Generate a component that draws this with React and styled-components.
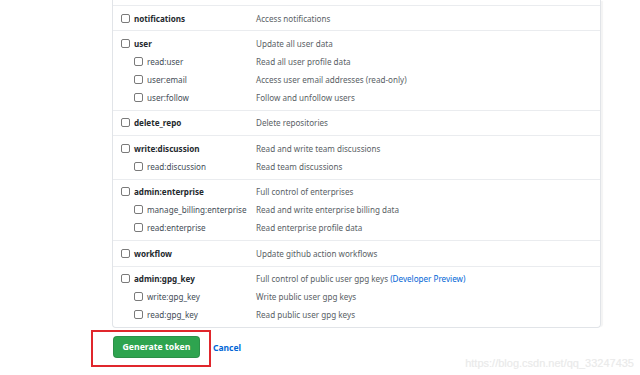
import React from 'react'
import styled, { createGlobalStyle } from 'styled-components'

const scopes = [
    { name: 'notifications', desc: 'Access notifications' },
    {
        name: 'user', desc: 'Update all user data', children: [
            { name: 'read:user', desc: 'Read all user profile data' },
            { name: 'user:email', desc: 'Access user email addresses (read-only)' },
            { name: 'user:follow', desc: 'Follow and unfollow users' },
        ]
    },
    { name: 'delete_repo', desc: 'Delete repositories' },
    {
        name: 'write:discussion', desc: 'Read and write team discussions', children: [
            { name: 'read:discussion', desc: 'Read team discussions' },
        ]
    },
    {
        name: 'admin:enterprise', desc: 'Full control of enterprises', children: [
            { name: 'manage_billing:enterprise', desc: 'Read and write enterprise billing data' },
            { name: 'read:enterprise', desc: 'Read enterprise profile data' },
        ]
    },
    { name: 'workflow', desc: 'Update github action workflows' },
    {
        name: 'admin:gpg_key', desc: 'Full control of public user gpg keys', preview: true, children: [
            { name: 'write:gpg_key', desc: 'Write public user gpg keys' },
            { name: 'read:gpg_key', desc: 'Read public user gpg keys' },
        ]
    },
]

const App = () => {
    return (
        <Page>
            <GlobalStyle />
            {/* Scope list (scrolled, top is cut off) */}
            <ScopeBox>
                {scopes.map((scope) => (
                    <ScopeGroup key={scope.name}>
                        <Row>
                            <Name>
                                <Check />
                                <Label $strong>{scope.name}</Label>
                            </Name>
                            <Desc>
                                {scope.desc}
                                {scope.preview && <Preview> (Developer Preview)</Preview>}
                            </Desc>
                        </Row>
                        {scope.children && scope.children.map((child) => (
                            <Row key={child.name}>
                                <Name $sub>
                                    <Check />
                                    <Label>{child.name}</Label>
                                </Name>
                                <Desc>{child.desc}</Desc>
                            </Row>
                        ))}
                    </ScopeGroup>
                ))}
            </ScopeBox>
            {/* Actions */}
            <Actions>
                <Generate>Generate token</Generate>
                <Highlight />
                <Cancel href="#">Cancel</Cancel>
            </Actions>
            <Watermark>https://blog.csdn.net/qq_33247435</Watermark>
        </Page>
    )
}

const GlobalStyle = createGlobalStyle`
    html, body {
        margin: 0;
        padding: 0;
        background: #fff;
        overflow: hidden;
    }
    body {
        font-family: "Noto Sans", "Open Sans", sans-serif;
        color: #24292e;
    }
`

// Page
const Page = styled.div`
    position: relative;
    width: 640px;
    height: 375px;
    overflow: hidden;
    padding-left: 112px;
    box-sizing: border-box;
`

// Scope box
const ScopeBox = styled.div`
    width: 489px;
    padding-top: 5px;
    border: 1px solid #e1e4e8;
    border-top: none;
    border-radius: 0 0 4px 4px;
    box-sizing: border-box;
    box-shadow: 3px 0 1px -1px #f4f4f4;
`

const ScopeGroup = styled.div`
    padding: 3px 0 3.45px;
    border-top: 1px solid #eaecef;
`

const Row = styled.div`
    display: grid;
    grid-template-columns: 143px 1fr;
    align-items: center;
    height: 18px;
    font-size: 8.1px;
`

const Name = styled.div`
    display: flex;
    align-items: center;
    gap: 4px;
    padding-left: ${(p) => (p.$sub ? '21px' : '8px')};
`

const Check = styled.span`
    display: inline-block;
    width: 9px;
    height: 9px;
    box-sizing: border-box;
    border: 1px solid #7a7a7a;
    border-radius: 2px;
    background: #fff;
    flex-shrink: 0;
`

const Label = styled.span`
    font-weight: ${(p) => (p.$strong ? 700 : 400)};
    color: ${(p) => (p.$strong ? '#24292e' : '#444d56')};
    white-space: nowrap;
`

const Desc = styled.span`
    color: #5a5f66;
    white-space: nowrap;
`

const Preview = styled.span`
    color: #0366d6;
`

// Actions
const Actions = styled.div`
    position: relative;
    display: flex;
    align-items: center;
    margin-top: 8px;
    padding-left: 1px;
`

const Generate = styled.button`
    width: 87px;
    height: 22px;
    border: 1px solid rgba(27, 31, 35, 0.15);
    border-radius: 4px;
    background: #2ea44f;
    color: #fff;
    font-family: inherit;
    font-size: 8.7px;
    font-weight: 700;
    padding: 0;
`

const Highlight = styled.span`
    position: absolute;
    left: -21px;
    top: -6px;
    width: 120px;
    height: 37px;
    border: 2px solid #e0262c;
    box-sizing: border-box;
`

const Cancel = styled.a`
    margin-left: 13px;
    color: #0366d6;
    font-size: 8.5px;
    font-weight: 700;
    text-decoration: none;
`

const Watermark = styled.span`
    position: absolute;
    right: 6px;
    bottom: 6px;
    font-family: "Liberation Sans", sans-serif;
    font-size: 11px;
    color: #eaeaea;
    text-shadow: 0 0 1px #f4f4f4;
`

export default App
